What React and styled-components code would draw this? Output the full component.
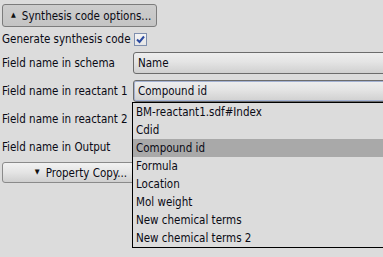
import React from 'react';
import styled, { createGlobalStyle } from 'styled-components';

const GlobalStyle = createGlobalStyle`
  html, body {
    margin: 0;
    padding: 0;
    background: #dcdcdc;
    overflow: hidden;
  }
  body {
    font-family: "DejaVu Sans Condensed", "DejaVu Sans", sans-serif;
    font-size: 11.5px;
    color: #0a0a14;
    white-space: nowrap;
  }
`;

const Panel = styled.div`
  display: flex;
  flex-direction: column;
  align-items: flex-start;
  padding: 4px 0 0 2px;
  width: 383px;
  height: 257px;
  box-sizing: border-box;
`;

const ToggleButton = styled.button`
  display: flex;
  align-items: center;
  justify-content: ${p => (p.$center ? 'center' : 'flex-start')};
  gap: 6px;
  width: ${p => p.$width}px;
  height: ${p => p.$height}px;
  margin-top: ${p => p.$top || 0}px;
  padding: ${p => (p.$center ? '0' : '0 0 0 8px')};
  box-sizing: border-box;
  border: 1px solid ${p => (p.$pressed ? '#7c7c7c' : '#8a8a8a')};
  border-radius: 3px;
  background: ${p =>
    p.$pressed
      ? 'linear-gradient(#cdcdcd, #c4c4c4)'
      : 'linear-gradient(#f2f2f2, #e4e4e4 50%, #cfcfcf)'};
  font: inherit;
  color: inherit;
  white-space: nowrap;
`;

const Arrow = styled.span`
  font-size: 7px;
  line-height: 1;
  color: #111;
`;

const CheckRow = styled.label`
  display: flex;
  align-items: center;
  gap: 3px;
  height: 16px;
  margin-top: 4px;
`;

const CheckBox = styled.span`
  display: flex;
  align-items: center;
  justify-content: center;
  width: 11px;
  height: 11px;
  border: 1px solid #7f8fae;
  background: linear-gradient(#f4f4f4, #e6e6e6);
`;

const Form = styled.div`
  display: grid;
  grid-template-columns: 131px 270px;
  grid-auto-rows: 22px;
  row-gap: 6px;
  margin-top: 5px;
  align-items: center;
`;

const Label = styled.span``;

const Combo = styled.div`
  position: relative;
  display: flex;
  align-items: center;
  height: 22px;
  padding-left: 4px;
  box-sizing: border-box;
  border: 1px solid #6c6c6c;
  border-radius: 3px;
  background: linear-gradient(#eeeeee, #e4e4e4 45%, #d0d0d0);
  box-shadow: ${p => (p.$focused ? 'inset 0 0 0 1px #a3b1d2' : 'none')};
`;

const Popup = styled.ul`
  position: absolute;
  left: -2px;
  top: calc(100% + 1px);
  width: 262px;
  margin: 0;
  padding: 0;
  list-style: none;
  border: 1px solid #000;
  background: #dcdcdc;
  z-index: 2;
`;

const Option = styled.li`
  height: 18px;
  line-height: 18px;
  padding-left: 3px;
  background: ${p => (p.$selected ? '#a9a9a9' : 'transparent')};
`;

const options = [
  'BM-reactant1.sdf#Index',
  'Cdid',
  'Compound id',
  'Formula',
  'Location',
  'Mol weight',
  'New chemical terms',
  'New chemical terms 2',
];

export default function App() {
  return (
    <>
      <GlobalStyle />
      <Panel>
        <ToggleButton $pressed $width={155} $height={23}>
          <Arrow>▲</Arrow>
          Synthesis code options...
        </ToggleButton>
        <CheckRow>
          Generate synthesis code
          <CheckBox>
            <svg width="9" height="9" viewBox="0 0 9 9">
              <path d="M1 4.5 L3.5 7 L8 1.5" fill="none" stroke="#2b4aa0" strokeWidth="2" />
            </svg>
          </CheckBox>
        </CheckRow>
        <Form>
          <Label>Field name in schema</Label>
          <Combo>Name</Combo>
          <Label>Field name in reactant 1</Label>
          <Combo $focused>
            Compound id
            <Popup>
              {options.map(o => (
                <Option key={o} $selected={o === 'Compound id'}>{o}</Option>
              ))}
            </Popup>
          </Combo>
          <Label>Field name in reactant 2</Label>
          <Combo />
          <Label>Field name in Output</Label>
          <Combo />
        </Form>
        <ToggleButton $center $width={158} $height={21} $top={4}>
          <Arrow>▼</Arrow>
          Property Copy...
        </ToggleButton>
      </Panel>
    </>
  );
}
